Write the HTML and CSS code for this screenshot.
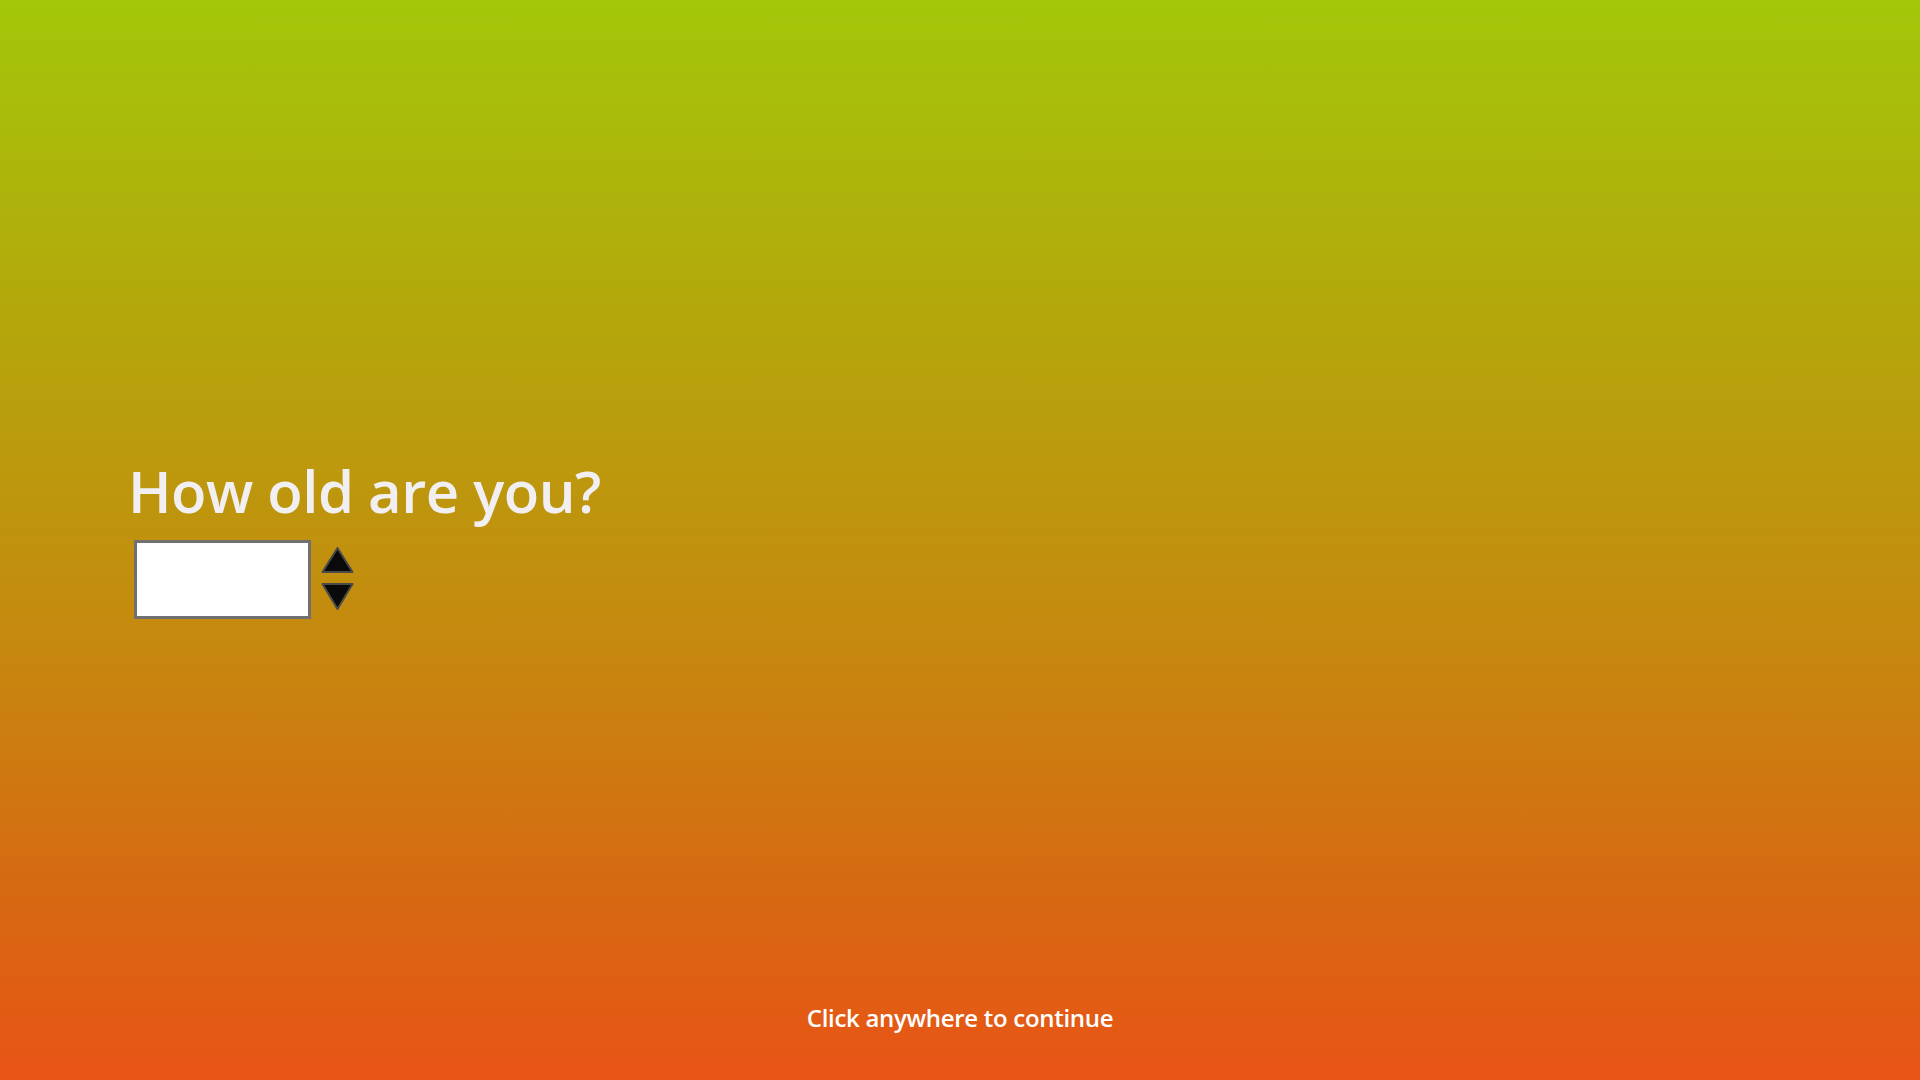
FILE: index.html
```html
<!DOCTYPE html>
<html>
<head>
<meta charset="utf-8">
<link rel="stylesheet" href="styles.css">
</head>
<body>
<main class="screen">
  <section class="question">
    <h1 class="title">How old are you?</h1>
    <div class="field">
      <input class="age" type="text" aria-label="Age">
      <div class="spinner">
        <svg class="arrow" width="33" height="28" viewBox="0 0 33 28"><path d="M16.5 2 L31.5 26 L1.5 26 Z" fill="#0a0a0a" stroke="#4a4a4a" stroke-width="2" stroke-linejoin="round"/></svg>
        <svg class="arrow" width="33" height="29" viewBox="0 0 33 29"><path d="M1.5 2 L31.5 2 L16.5 27 Z" fill="#0a0a0a" stroke="#4a4a4a" stroke-width="2" stroke-linejoin="round"/></svg>
      </div>
    </div>
  </section>
  <footer class="hint">Click anywhere to continue</footer>
</main>
</body>
</html>
```
FILE: styles.css
```css
html, body {
  margin: 0;
  padding: 0;
  height: 100%;
}
body {
  font-family: "Open Sans", "Noto Sans", sans-serif;
}
.screen {
  width: 1920px;
  height: 1080px;
  background: linear-gradient(to bottom, #a3c709 0%, #b7a10c 35%, #c6880f 60%, #d86612 85%, #e95416 100%);
  display: flex;
  flex-direction: column;
  box-sizing: border-box;
}
.question {
  padding: 451px 0 0 128px;
  flex: 1;
}
.title {
  margin: 0;
  font-size: 58px;
  font-weight: 600;
  color: #f1eff1;
  line-height: 80px;
  letter-spacing: -0.5px;
}
.field {
  display: flex;
  align-items: flex-start;
  margin-top: 9px;
  margin-left: 6px;
  gap: 10px;
}
.age {
  width: 177px;
  height: 79px;
  box-sizing: border-box;
  border: 3px solid #707070;
  background: #fff;
  margin: 0;
  padding: 0;
  outline: none;
}
.spinner {
  display: flex;
  flex-direction: column;
  gap: 8px;
  padding-top: 6px;
}
.arrow {
  display: block;
}
.hint {
  text-align: center;
  color: #fff;
  font-size: 24px;
  font-weight: 600;
  padding-bottom: 46px;
  letter-spacing: -0.3px;
}
```
